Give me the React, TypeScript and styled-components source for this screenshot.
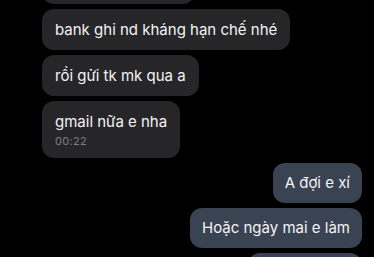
import React from 'react';
import styled, { createGlobalStyle } from 'styled-components';

const GlobalStyle = createGlobalStyle`
  html, body {
    margin: 0;
    padding: 0;
    background: #000;
  }
  body {
    font-family: Inter, "Noto Sans", "Liberation Sans", sans-serif;
    -webkit-font-smoothing: antialiased;
  }
`;

const Screen = styled.div`
  width: 374px;
  height: 257px;
  overflow: hidden;
  background: #000;
`;

const Thread = styled.div`
  display: flex;
  flex-direction: column;
  gap: 5px;
  padding: 0 12px 0 42px;
  margin-top: -37px;
`;

const Row = styled.div<{ $out?: boolean }>`
  display: flex;
  justify-content: ${({ $out }) => ($out ? 'flex-end' : 'flex-start')};
`;

const Bubble = styled.div<{ $out?: boolean }>`
  box-sizing: border-box;
  padding: ${({ $out }) => ($out ? '10px 12px' : '10.5px 13px')};
  border-radius: 12px;
  background: ${({ $out }) => ($out ? '#3a4352' : '#262628')};
  color: #f4f4f6;
  font-size: 15px;
  line-height: 20px;
  white-space: nowrap;
`;

const Time = styled.div`
  margin-top: 2px;
  color: #7d7d82;
  font-size: 11px;
  line-height: 14px;
  letter-spacing: 0.3px;
`;

type Msg = { text: string; out?: boolean; time?: string; width?: number };

// first and last bubbles are only partly on screen; their text is out of view
const messages: Msg[] = [
  { text: '\u00a0', width: 153 },
  { text: 'bank ghi nd kháng hạn chế nhé' },
  { text: 'rồi gửi tk mk qua a' },
  { text: 'gmail nữa e nha', time: '00:22' },
  { text: 'A đợi e xí', out: true },
  { text: 'Hoặc ngày mai e làm', out: true },
  { text: '\u00a0', out: true, width: 114 },
];

export default function App() {
  return (
    <Screen>
      <GlobalStyle />
      <Thread>
        {messages.map((m, i) => (
          <Row key={i} $out={m.out}>
            <Bubble $out={m.out} style={m.width ? { width: m.width } : undefined}>
              {m.text}
              {m.time && <Time>{m.time}</Time>}
            </Bubble>
          </Row>
        ))}
      </Thread>
    </Screen>
  );
}
